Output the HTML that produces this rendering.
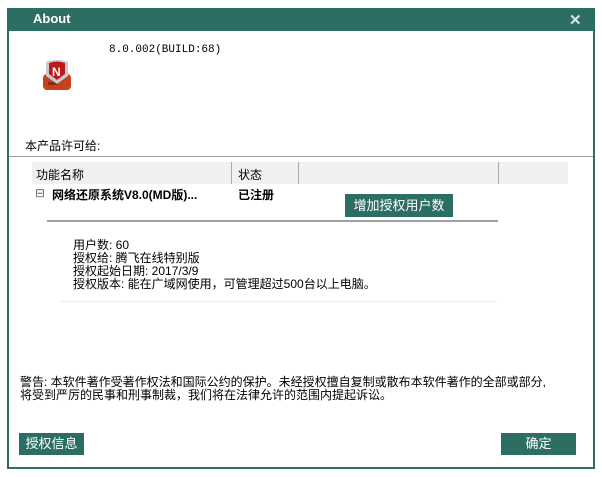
<!DOCTYPE html>
<html><head><meta charset="utf-8"><style>
body{margin:0;width:602px;height:477px;background:#fff;position:relative;overflow:hidden;font-family:"Liberation Sans","Noto Sans CJK SC",sans-serif;font-size:12px;color:#000}
.a{position:absolute}
.win{left:7px;top:8px;width:584px;height:459px;border:2px solid #2d6e64;border-top:none}
.tb{left:7px;top:8px;width:588px;height:23px;background:#2d6e64}
.btn{background:#2d6e64;color:#fff;text-align:center;font-size:13px}
.mono{font-family:"Liberation Mono","Noto Sans CJK SC",monospace}
</style></head><body>
<div class="a win"></div>
<div class="a tb"></div>
<div class="a" style="left:33px;top:11px;color:#fff;font-weight:bold;font-size:13px">About</div>
<div class="a" style="left:569px;top:11px;color:#cfe8e8;font-weight:bold;font-size:15px">✕</div>
<svg class="a" style="left:42px;top:58px" width="30" height="34" viewBox="0 0 30 34">
<rect x="1" y="16" width="28" height="16" rx="4" fill="#c8401e"/>
<rect x="6" y="24" width="10" height="3" fill="#8a2a10"/>
<path d="M4 4 Q15 0 26 4 L26 18 L15 26 L4 18Z" fill="#c8ccd0"/>
<path d="M7 5 Q15 2 23 5 L23 16 L15 22 L7 16Z" fill="#c01818"/>
<text x="10" y="18" font-size="12" font-weight="bold" fill="#fff" font-family="Liberation Sans">N</text>
</svg>
<div class="a mono" style="left:109px;top:44px;font-size:11px">8.0.002(BUILD:68)</div>
<div class="a" style="left:25px;top:137px">本产品许可给:</div>
<div class="a" style="left:9px;top:156px;width:584px;height:1px;background:#a0a0a0"></div>
<div class="a" style="left:32px;top:162px;width:536px;height:22px;background:#f0f0f0"></div>
<div class="a" style="left:231px;top:162px;width:1px;height:22px;background:#a8a8a8"></div>
<div class="a" style="left:298px;top:162px;width:1px;height:22px;background:#a8a8a8"></div>
<div class="a" style="left:498px;top:162px;width:1px;height:22px;background:#a8a8a8"></div>
<div class="a" style="left:36px;top:166px">功能名称</div>
<div class="a" style="left:238px;top:166px">状态</div>
<div class="a" style="left:35px;top:186px;color:#666">⊟</div>
<div class="a" style="left:52px;top:186px;font-weight:bold">网络还原系统V8.0(MD版)...</div>
<div class="a" style="left:238px;top:186px;font-weight:bold">已注册</div>
<div class="a btn" style="left:345px;top:194px;width:108px;height:23px;line-height:23px">增加授权用户数</div>
<div class="a" style="left:47px;top:220px;width:451px;height:2px;background:#a0a0a0"></div>
<div class="a" style="left:73px;top:239px;line-height:13px;font-size:12px">用户数: 60<br>授权给: 腾飞在线特别版<br>授权起始日期: 2017/3/9<br>授权版本: 能在广域网使用，可管理超过500台以上电脑。</div>
<div class="a" style="left:60px;top:301px;width:438px;height:1px;background:#eee"></div>
<div class="a" style="left:20px;top:376px;line-height:13px">警告: 本软件著作受著作权法和国际公约的保护。未经授权擅自复制或散布本软件著作的全部或部分,<br>将受到严厉的民事和刑事制裁，我们将在法律允许的范围内提起诉讼。</div>
<div class="a btn" style="left:19px;top:433px;width:65px;height:22px;line-height:22px">授权信息</div>
<div class="a btn" style="left:501px;top:433px;width:75px;height:22px;line-height:22px">确定</div>
</body></html>
